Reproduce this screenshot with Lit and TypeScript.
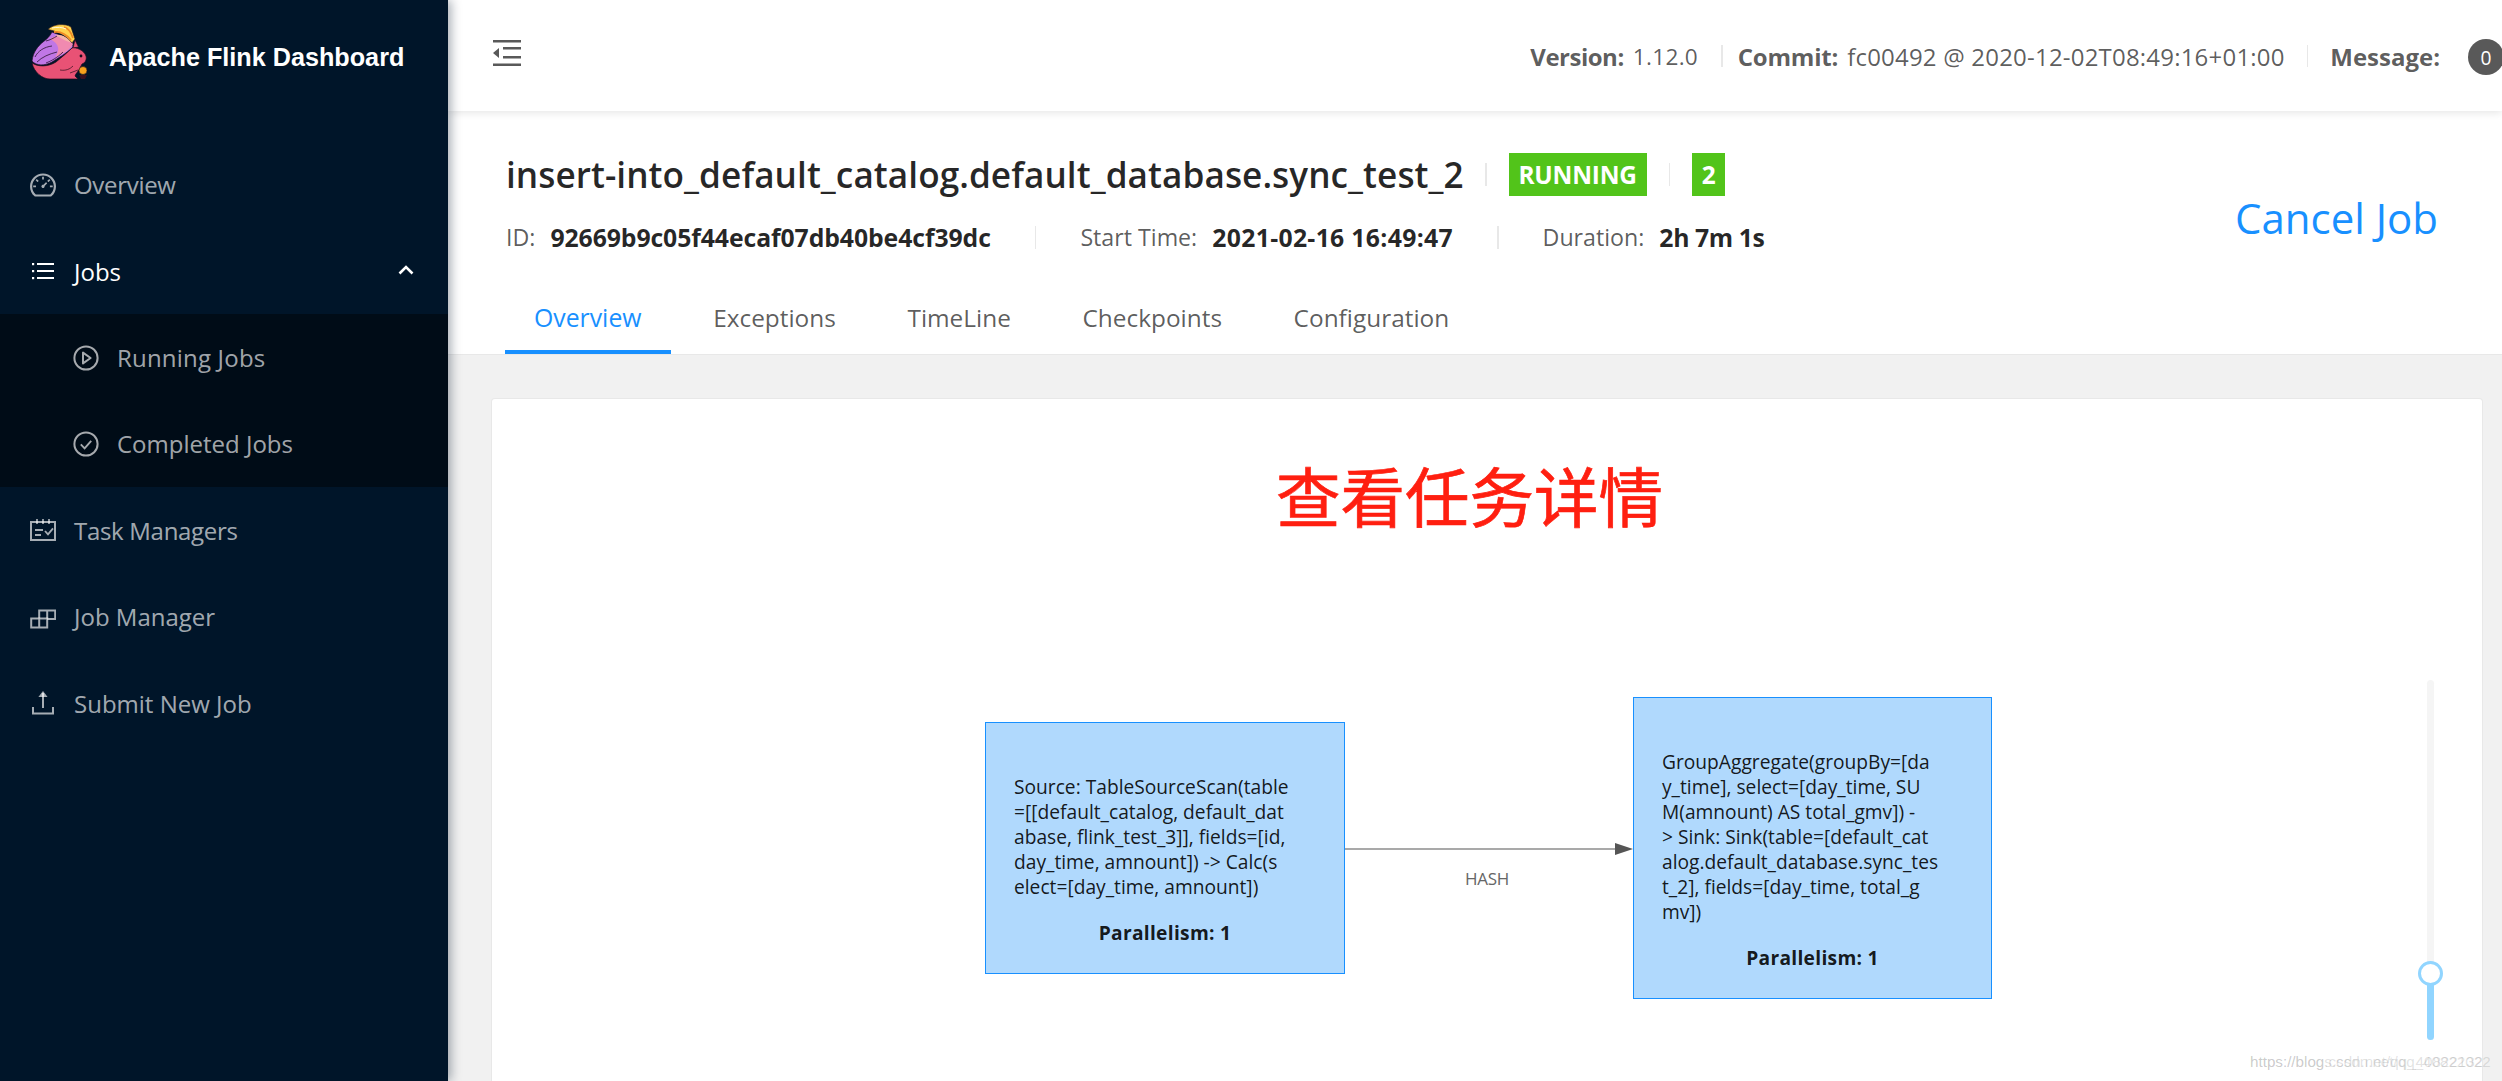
import { LitElement, html, css, svg } from "lit";
import { customElement } from "lit/decorators.js";

const icon = (body: unknown, cls = "ic", vb = "0 0 26 26") =>
  html`<svg class=${cls} viewBox=${vb} width="26" height="26" aria-hidden="true">${body}</svg>`;

const dash = html`<svg class="ic" viewBox="64 64 896 896" width="26" height="26" aria-hidden="true"><path fill="currentColor" d="M924.8 385.6a446.7 446.7 0 0 0-96-142.4 446.7 446.7 0 0 0-142.4-96C631.1 123.8 572.5 112 512 112s-119.1 11.8-174.4 35.2a446.7 446.7 0 0 0-142.4 96 446.7 446.7 0 0 0-96 142.4C75.8 440.9 64 499.5 64 560c0 132.7 58.3 257.7 159.9 343.1l1.7 1.4c5.8 4.8 13.1 7.5 20.6 7.5h531.7c7.5 0 14.8-2.7 20.6-7.5l1.7-1.4C901.7 817.7 960 692.7 960 560c0-60.5-11.9-119.1-35.2-174.4zM761.4 836H262.6A371.12 371.12 0 0 1 140 560c0-99.4 38.7-192.8 109-263 70.3-70.3 163.7-109 263-109 99.4 0 192.8 38.7 263 109 70.3 70.3 109 163.7 109 263 0 105.6-44.5 205.5-122.6 276z"/><path fill="currentColor" d="M623.5 421.5a8.03 8.03 0 0 0-11.3 0L527.7 506c-18.7-5-39.4-.2-54.1 14.5a55.95 55.95 0 0 0 0 79.2 55.95 55.95 0 0 0 79.2 0 55.87 55.87 0 0 0 14.5-54.1l84.5-84.5c3.1-3.1 3.1-8.2 0-11.3l-28.3-28.3zM490 320h44c4.4 0 8-3.6 8-8v-80c0-4.4-3.6-8-8-8h-44c-4.4 0-8 3.6-8 8v80c0 4.4 3.6 8 8 8zm260 218v44c0 4.4 3.6 8 8 8h80c4.4 0 8-3.6 8-8v-44c0-4.4-3.6-8-8-8h-80c-4.4 0-8 3.6-8 8zm12.7-197.2l-31.1-31.1a8.03 8.03 0 0 0-11.3 0l-56.6 56.6a8.03 8.03 0 0 0 0 11.3l31.1 31.1c3.1 3.1 8.2 3.1 11.3 0l56.6-56.6c3.1-3.1 3.1-8.2 0-11.3zm-458.6-31.1a8.03 8.03 0 0 0-11.3 0l-31.1 31.1a8.03 8.03 0 0 0 0 11.3l56.6 56.6c3.1 3.1 8.2 3.1 11.3 0l31.1-31.1c3.1-3.1 3.1-8.2 0-11.3l-56.6-56.6zM262 530h-80c-4.4 0-8 3.6-8 8v44c0 4.4 3.6 8 8 8h80c4.4 0 8-3.6 8-8v-44c0-4.4-3.6-8-8-8z"/></svg>`;

const listIcon = icon(svg`<g fill="currentColor"><rect x="2" y="5" width="2.2" height="2.2"/><rect x="2" y="12" width="2.2" height="2.2"/><rect x="2" y="19" width="2.2" height="2.2"/><rect x="7" y="5" width="17" height="2"/><rect x="7" y="12" width="17" height="2"/><rect x="7" y="19" width="17" height="2"/></g>`);
const playIcon = icon(svg`<g fill="none" stroke="currentColor" stroke-width="2"><circle cx="13" cy="13" r="11.6"/><path d="M10 7.6v10.8l7.6-5.4z" stroke-linejoin="round"/></g>`);
const checkIcon = icon(svg`<g fill="none" stroke="currentColor" stroke-width="2"><circle cx="13" cy="13" r="11.6"/><path d="M7.8 13.4l3.8 4 6.6-7.6" stroke-width="1.9"/></g>`);
const schedIcon = icon(svg`<g fill="none" stroke="currentColor" stroke-width="2"><rect x="1" y="5" width="24" height="18"/><path d="M7 2v5M13 2v5M19 2v5" stroke-width="1.7"/><path d="M5 13h8M5 18h6" stroke-width="1.8"/><path d="M15 14l3 3.4 5-6" stroke-width="1.8"/></g>`);
const buildIcon = icon(svg`<g fill="none" stroke="currentColor" stroke-width="2"><path d="M1.2 14.5h16v9h-16zM9.2 14.5v9"/><path d="M9.2 14.5V6.5h16v8.6h-8M17.2 6.5v8"/></g>`);
const uploadIcon = icon(svg`<g fill="none" stroke="currentColor" stroke-width="2"><path d="M13 3v15"/><path d="M3 17v6.4h20V17"/></g><path d="M13 1l-4.6 6h9.2z" fill="currentColor"/>`);

const logo = html`<svg class="logo" viewBox="30 22 60 60" width="60" height="60" aria-hidden="true">
  <path fill="#c077e6" stroke="#1c0d1e" stroke-width=".7" d="M32 61C33 52 38 46 43 42 47 39 50 36 52 32L72 40 73 47C66 54 58 58 52 62 45 66 36 66 32 61Z"/>
  <path fill="#f08ab0" d="M50 39C56 34 66 36 73 44 70 50 62 55 55 57 60 51 60 44 50 39Z"/>
  <path fill="#f5b5a8" d="M55 35C61 34 68 37 73 43 68 42 62 39 55 35Z"/>
  <path fill="none" stroke="#2c1432" stroke-width=".8" d="M35 57C38 51 44 47 52 46M37 62C42 57 49 54 57 52M46 63C51 61 57 58 63 52M46 41C50 40 54 38 57 36"/>
  <path fill="#ffd24d" stroke="#1c0d1e" stroke-width=".6" d="M48 29.500C53 24 65 23 71 27L75 39 72 43C66 35 56 31 48 29.500Z"/>
  <path fill="none" stroke="#f08a24" stroke-width="1.800" d="M54 32C60 31 66 34 71 40M64 27C68 28 71 32 73 38"/>
  <path fill="none" stroke="#fff7d8" stroke-width="1" d="M52 28C57 27 62 27 66 29"/>
  <path fill="#e95275" stroke="#1c0d1e" stroke-width=".6" d="M73 48L75 40 78.500 47Z"/>
  <path fill="#e95275" stroke="#1c0d1e" stroke-width=".7" d="M32 63C38 67 48 67 56 62 62 57 68 52 72 48 76 47 84 50 86 56 87 60 85 63 82 64L80 68C78 72 76 73 75 76L78 79 50 79C42 79 34 72 32 63Z"/>
  <path fill="none" stroke="#2e0e1c" stroke-width=".7" d="M60 70C66 71 70 69 73 66M70 73L78 70"/>
  <circle cx="81" cy="56" r="1.400" fill="#1c0d1e"/>
  <circle cx="83" cy="70.500" r="4" fill="#f8a21c" stroke="#1c0d1e" stroke-width=".6"/>
  <path fill="#3a1020" d="M79 75h8l-2 4h-4z"/>
</svg>`;

@customElement("app-root")
export class AppRoot extends LitElement {
  static styles = css`
    :host {
      display: flex;
      width: 2502px;
      height: 1081px;
      overflow: hidden;
      background: #f1f1f1;
      font-family: "Open Sans", "Noto Sans", sans-serif;
      color: rgba(0, 0, 0, 0.65);
    }
    aside {
      flex: none;
      width: 448px;
      height: 100%;
      background: #001529;
      color: rgba(255, 255, 255, 0.65);
      box-shadow: 3px 0 10px rgba(0, 21, 41, 0.35);
      position: relative;
      z-index: 3;
    }
    .brand {
      height: 111px;
      display: flex;
      align-items: center;
      padding-left: 30px;
      gap: 19px;
    }
    .logo { flex: none; margin-top: -7px; }
    .brand b {
      font: 700 25.2px/1 "Liberation Sans", Arial, sans-serif;
      color: #fff;
      margin-top: 5px;
    }
    .menu { padding-top: 30.6px; }
    .row {
      height: 86.4px;
      display: flex;
      align-items: center;
      padding-left: 30px;
      gap: 18px;
      font-size: 24px;
    }
    .row.tight { letter-spacing: -0.3px; }
    .row.loose { letter-spacing: 0.2px; }
    .row.open { color: #fff; position: relative; }
    .chev { position: absolute; left: 398px; top: 37px; }
    .sub { background: #000c17; }
    .sub .row { padding-left: 73px; }
    .ic { flex: none; display: block; }

    main {
      flex: 1;
      min-width: 0;
      display: flex;
      flex-direction: column;
    }
    .top {
      flex: none;
      height: 111px;
      background: #fff;
      display: flex;
      align-items: center;
      justify-content: space-between;
      padding-left: 45px;
      box-shadow: 0 2px 8px rgba(0, 0, 0, 0.1);
      position: relative;
      z-index: 2;
      font-size: 24px;
    }
    .toggle { display: block; color: #595959; margin-top: -6px; }
    .info {
      display: flex;
      align-items: center;
      margin-right: -2px;
      margin-top: 1px;
    }
    .info b { font-weight: 700; letter-spacing: -0.2px; }
    .info b.ver { letter-spacing: -0.5px; }
    .info b.msg { letter-spacing: 0; }
    .info .v { margin-left: 9px; letter-spacing: 0.2px; }
    .info .v.small { font-size: 22.6px; letter-spacing: 0.3px; }
    .info i { display: block; width: 1.6px; height: 22px; background: #e8e8e8; margin: 0 15px 0 23px; }
    .info i.w { margin: 0 22px 0 22px; }
    .count {
      width: 36px;
      height: 36px;
      border-radius: 50%;
      background: #595959;
      color: #fff;
      display: grid;
      place-items: center;
      margin-left: 28px;
      margin-top: 2px;
      font-size: 19.2px;
    }

    .ph {
      flex: none;
      height: 244px;
      background: #fff;
      border-bottom: 1.6px solid #e8e8e8;
      box-sizing: border-box;
      padding: 42px 64px 0 58px;
      display: flex;
      flex-direction: column;
    }
    .phtop { height: 129px; display: flex; justify-content: space-between; align-items: flex-start; }
    .titlerow { height: 43px; display: flex; align-items: center; }
    h1 {
      margin: 0;
      font-size: 35.2px;
      font-weight: 600;
      color: rgba(0, 0, 0, 0.85);
      letter-spacing: 0.05px;
      line-height: 43px;
      width: 957px;
      white-space: nowrap;
    }
    .sep { display: block; width: 1.6px; height: 23px; background: #e8e8e8; }
    .tag {
      height: 43px;
      background: #52c41a;
      color: #fff;
      font-weight: 700;
      font-size: 24.4px;
      line-height: 43px;
      display: grid;
      place-items: center;
      letter-spacing: -0.2px;
    }
    .t1 { width: 138px; margin: 0 22px; }
    .t2 { width: 33px; margin-left: 22px; }
    .titlerow .sep0 { margin-left: 22px; }
    .meta { display: flex; align-items: center; height: 30px; margin-top: 26px; font-size: 23.2px; white-space: nowrap; }
    .meta b { color: rgba(0, 0, 0, 0.85); font-weight: 700; font-size: 24.8px; margin-left: 15px; letter-spacing: -0.1px; }
    .meta b.date { letter-spacing: 0.3px; }
    .meta b.dur { letter-spacing: -0.4px; }
    .meta .sep { margin: 0 44px; }
    .cancel { color: #1890ff; font-size: 42px; line-height: 50px; margin-top: 40px; }
    .tabs { display: flex; gap: 13.6px; margin-left: -1px; height: 73px; }
    .tab {
      height: 73px;
      box-sizing: border-box;
      padding: 0 29px;
      line-height: 73px;
      font-size: 24.4px;
      white-space: nowrap;
    }
    .tab.on { color: #1890ff; border-bottom: 4px solid #1890ff; font-size: 24.8px; }

    .content {
      flex: 1;
      min-height: 0;
      padding: 44px 20px 0 44px;
    }
    .card {
      height: 800px;
      background: #fff;
      border-radius: 3px;
      box-shadow: 0 0 0 1px #e8e8e8;
      position: relative;
    }
    .note {
      position: absolute;
      left: 784px;
      top: 53px;
      margin: 0;
      font: 400 64.500px/84px "Noto Sans CJK SC", sans-serif;
      -webkit-text-stroke: 0.7px #ff1f10;
      color: #ff1f10;
      white-space: nowrap;
    }
    .node {
      position: absolute;
      box-sizing: border-box;
      background: #b0d9fd;
      border: 1.6px solid #1890ff;
      padding: 22px 10px 0 28px;
      color: rgba(0, 0, 0, 0.9);
      font-size: 19.2px;
      line-height: 25px;
      white-space: nowrap;
      display: flex;
      flex-direction: column;
      justify-content: center;
    }
    .node p { margin: 0; }
    .node b { display: block; text-align: center; margin: 21px 0 0 -18px; font-weight: 700; letter-spacing: 0.3px; }
    .n1 { left: 493px; top: 323px; width: 360px; height: 252px; }
    .n2 { left: 1141px; top: 298px; width: 359px; height: 302px; }
    .edge { position: absolute; left: 853px; top: 440px; }
    .hash { position: absolute; left: 973px; top: 469px; font-size: 17px; line-height: 22px; color: #666; letter-spacing: -0.3px; }
    .slider { position: absolute; left: 1935px; top: 281px; width: 7px; height: 360px; border-radius: 4px; background: #f5f5f5; }
    .fill { position: absolute; left: 0; bottom: 0; width: 7px; height: 67px; background: #91d5ff; border-radius: 0 0 4px 4px; }
    .handle { position: absolute; left: -9px; top: 281px; width: 25px; height: 25px; box-sizing: border-box; border: 3.5px solid #91d5ff; border-radius: 50%; background: #fff; }
    .wm { position: absolute; left: 2250px; top: 1051px; z-index: 5; font: 400 15.200px/22px "Liberation Sans", Arial, sans-serif; color: rgba(110, 110, 110, 0.2); white-space: nowrap; }
  `;

  render() {
    return html`
      <aside>
        <div class="brand">${logo}<b>Apache Flink Dashboard</b></div>
        <nav class="menu">
          <div class="row tight">${dash}<span>Overview</span></div>
          <div class="row open">${listIcon}<span>Jobs</span>
            <svg class="chev" viewBox="0 0 16 10" width="16" height="10" aria-hidden="true"><path d="M1.500 8.500L8 2l6.500 6.500" fill="none" stroke="#fff" stroke-width="2.600"/></svg>
          </div>
          <div class="sub">
            <div class="row loose">${playIcon}<span>Running Jobs</span></div>
            <div class="row">${checkIcon}<span>Completed Jobs</span></div>
          </div>
          <div class="row tight">${schedIcon}<span>Task Managers</span></div>
          <div class="row">${buildIcon}<span>Job Manager</span></div>
          <div class="row">${uploadIcon}<span>Submit New Job</span></div>
        </nav>
      </aside>
      <main>
        <header class="top">
          <svg class="toggle" viewBox="0 0 28 26" width="28" height="26" aria-hidden="true">
            <g fill="currentColor"><rect x="0" y="0" width="28" height="2.500"/><rect x="0" y="23.500" width="28" height="2.500"/><rect x="10" y="7" width="18" height="2.500"/><rect x="10" y="16" width="18" height="2.500"/><path d="M0 13l6-5v10z"/></g>
          </svg>
          <div class="info">
            <b class="ver">Version:</b><span class="v small">1.12.0</span><i></i>
            <b>Commit:</b><span class="v">fc00492 @ 2020-12-02T08:49:16+01:00</span><i class="w"></i>
            <b class="msg">Message:</b><span class="count">0</span>
          </div>
        </header>
        <section class="ph">
          <div class="phtop">
            <div>
              <div class="titlerow">
                <h1>insert-into_default_catalog.default_database.sync_test_2</h1>
                <span class="sep sep0"></span>
                <span class="tag t1">RUNNING</span>
                <span class="sep"></span>
                <span class="tag t2">2</span>
              </div>
              <div class="meta">
                <span>ID:</span><b>92669b9c05f44ecaf07db40be4cf39dc</b><i class="sep"></i>
                <span>Start Time:</span><b class="date">2021-02-16 16:49:47</b><i class="sep"></i>
                <span>Duration:</span><b class="dur">2h 7m 1s</b>
              </div>
            </div>
            <div class="cancel">Cancel Job</div>
          </div>
          <div class="tabs">
            <div class="tab on">Overview</div>
            <div class="tab">Exceptions</div>
            <div class="tab">TimeLine</div>
            <div class="tab">Checkpoints</div>
            <div class="tab">Configuration</div>
          </div>
        </section>
        <section class="content">
          <div class="card">
            <h2 class="note">查看任务详情</h2>
            <div class="node n1">
              <p>Source: TableSourceScan(table<br>=[[default_catalog, default_dat<br>abase, flink_test_3]], fields=[id,<br>day_time, amnount]) -&gt; Calc(s<br>elect=[day_time, amnount])</p>
              <b>Parallelism: 1</b>
            </div>
            <svg class="edge" viewBox="0 0 288 20" width="288" height="20" aria-hidden="true">
              <path d="M0 10H272" stroke="#8c8c8c" stroke-width="1.600"/>
              <path d="M288 10l-18-6v12z" fill="#555"/>
            </svg>
            <div class="hash">HASH</div>
            <div class="node n2">
              <p>GroupAggregate(groupBy=[da<br>y_time], select=[day_time, SU<br>M(amnount) AS total_gmv]) -<br>&gt; Sink: Sink(table=[default_cat<br>alog.default_database.sync_tes<br>t_2], fields=[day_time, total_g<br>mv])</p>
              <b>Parallelism: 1</b>
            </div>
            <div class="slider"><div class="fill"></div><div class="handle"></div></div>
          </div>
        </section>
      </main>
      <div class="wm">https://blog.csdn.net/qq_40822132</div>
      <div class="wm">https://blogs.csdn.net/qq_40822022</div>
    `;
  }
}
